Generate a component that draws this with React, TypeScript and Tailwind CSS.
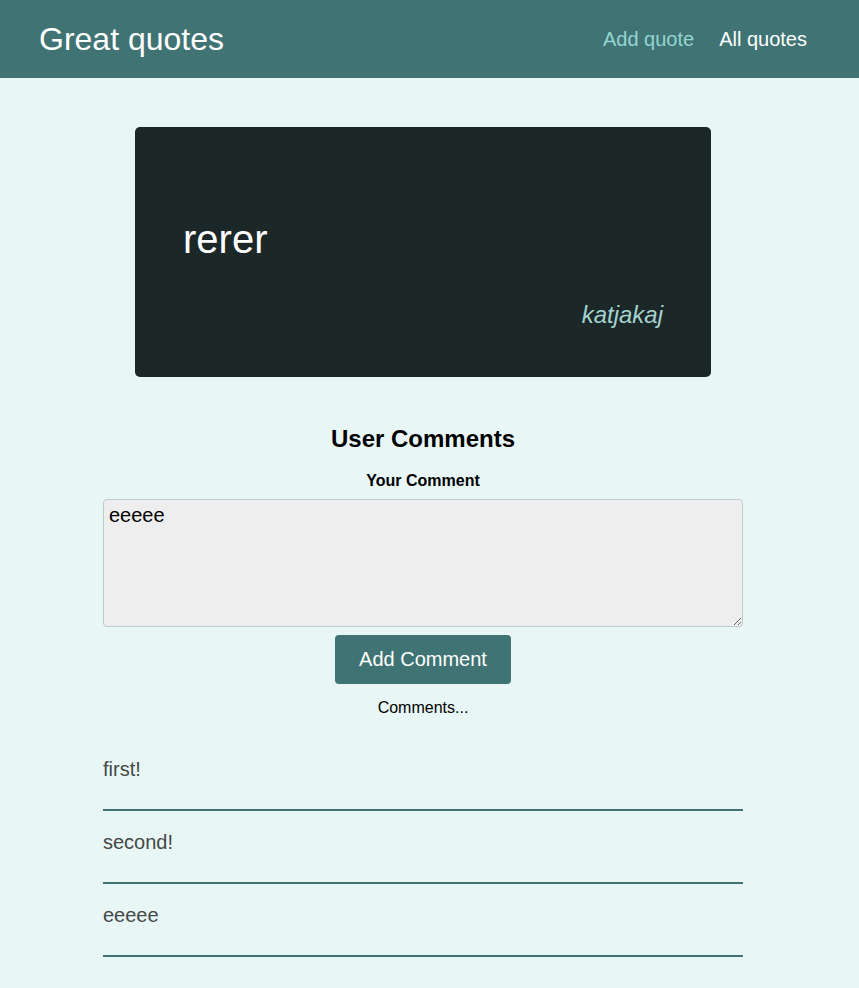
import React, { useState } from 'react';

const comments = ['first!', 'second!', 'eeeee'];

export default function App() {
  const [text, setText] = useState('eeeee');

  return (
    <div className="min-h-screen bg-[#e8f6f6] leading-[1.15] font-['Liberation_Sans',Arial,sans-serif]">
      {/* Header */}
      <header className="h-[78px] bg-[#407373] flex items-center justify-between pl-[39px] pr-[52px]">
        <div className="text-[32px] text-white">Great quotes</div>
        <nav className="flex items-center gap-[25px] text-[20px]">
          <a href="#" className="text-[#94d6d1]">Add quote</a>
          <a href="#" className="text-white">All quotes</a>
        </nav>
      </header>

      <div className="flex justify-center pr-[13px]">
        <main className="w-[640px]">
          {/* Quote card */}
          <figure className="w-[576px] mx-auto mt-[49px] bg-[#1c2728] rounded-[5px] pt-[89px] pb-[48px] px-12">
            <p className="text-[40px] text-white">rerer</p>
            <figcaption className="mt-[39px] text-right text-[24px] italic text-[#a3d3cf]">katjakaj</figcaption>
          </figure>

          {/* Comments */}
          <section className="mt-[48px] text-center">
            <h2 className="text-[24px] font-bold text-black">User Comments</h2>
            <form className="mt-[20px]" onSubmit={(e) => e.preventDefault()}>
              <label htmlFor="comment" className="block text-[16px] font-bold text-black">Your Comment</label>
              <textarea
                id="comment"
                value={text}
                onChange={(e) => setText(e.target.value)}
                className="block mt-2 w-full h-[128px] bg-[#eeeeee] border border-[#c4c8c8] rounded-[4px] px-[5px] py-[4px] text-[20px] text-black text-left outline-none"
              />
              <button className="mt-2 h-[49px] px-6 bg-[#407373] text-white text-[20px] rounded-[4px]">
                Add Comment
              </button>
            </form>
            <p className="mt-[15px] text-[16px] text-black">Comments...</p>
          </section>

          <ul className="mt-[21px]">
            {comments.map((c) => (
              <li key={c} className="pt-5 pb-7 border-b-2 border-[#407373] text-[20px] text-[#444848]">
                {c}
              </li>
            ))}
          </ul>
        </main>
      </div>
    </div>
  );
}
